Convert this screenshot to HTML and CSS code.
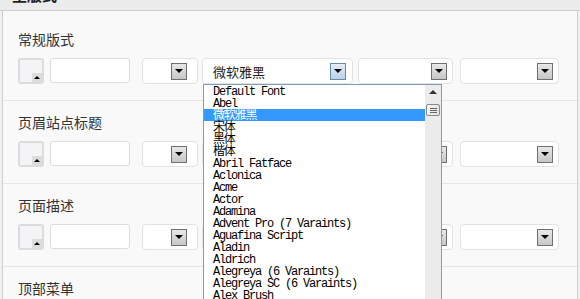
FILE: index.html
```html
<!DOCTYPE html>
<html lang="zh-CN">
<head>
    <meta charset="UTF-8">
    <meta name="viewport" content="width=device-width, initial-scale=1.0">
    <title>主版式</title>
    <link rel="stylesheet" href="styles.css">
</head>
<body>
    <div class="topbar"><span class="topbar-title">主版式</span></div>

    <div class="panel">
        <div class="section">
            <div class="label">常规版式</div>
            <div class="row">
                <div class="color-pick"><span class="color-arrow"></span></div>
                <input class="size-input" type="text">
                <div class="select select-unit"><span class="arrow"></span></div>
                <div class="select select-font">
                    <span class="select-text">微软雅黑</span>
                    <span class="arrow arrow-active"></span>
                    <div class="font-list">
                        <ul class="font-items">
                            <li>Default Font</li>
                            <li>Abel</li>
                            <li class="selected">微软雅黑</li>
                            <li>宋体</li>
                            <li>黑体</li>
                            <li>楷体</li>
                            <li>Abril Fatface</li>
                            <li>Aclonica</li>
                            <li>Acme</li>
                            <li>Actor</li>
                            <li>Adamina</li>
                            <li>Advent Pro (7 Varaints)</li>
                            <li>Aguafina Script</li>
                            <li>Aladin</li>
                            <li>Aldrich</li>
                            <li>Alegreya (6 Varaints)</li>
                            <li>Alegreya SC (6 Varaints)</li>
                            <li>Alex Brush</li>
                            <li>Alfa Slab One</li>
                            <li>Alice</li>
                        </ul>
                        <div class="scrollbar">
                            <div class="scroll-up"></div>
                            <div class="scroll-thumb"><span></span><span></span><span></span></div>
                        </div>
                    </div>
                </div>
                <div class="select select-weight"><span class="arrow"></span></div>
                <div class="select select-style"><span class="arrow"></span></div>
            </div>
        </div>

        <div class="section">
            <div class="label">页眉站点标题</div>
            <div class="row">
                <div class="color-pick"><span class="color-arrow"></span></div>
                <input class="size-input" type="text">
                <div class="select select-unit"><span class="arrow"></span></div>
                <div class="select select-font"><span class="arrow"></span></div>
                <div class="select select-weight"><span class="arrow"></span></div>
                <div class="select select-style"><span class="arrow"></span></div>
            </div>
        </div>

        <div class="section">
            <div class="label">页面描述</div>
            <div class="row">
                <div class="color-pick"><span class="color-arrow"></span></div>
                <input class="size-input" type="text">
                <div class="select select-unit"><span class="arrow"></span></div>
                <div class="select select-font"><span class="arrow"></span></div>
                <div class="select select-weight"><span class="arrow"></span></div>
                <div class="select select-style"><span class="arrow"></span></div>
            </div>
        </div>

        <div class="section">
            <div class="label">顶部菜单</div>
            <div class="row">
                <div class="color-pick"><span class="color-arrow"></span></div>
                <input class="size-input" type="text">
                <div class="select select-unit"><span class="arrow"></span></div>
                <div class="select select-font"><span class="arrow"></span></div>
                <div class="select select-weight"><span class="arrow"></span></div>
                <div class="select select-style"><span class="arrow"></span></div>
            </div>
        </div>
    </div>
</body>
</html>
```

FILE: styles.css
```css
body {
    margin: 0;
    width: 580px;
    background-color: #f1f1f1;
    font-family: "Noto Sans CJK SC", sans-serif;
    color: #333;
}
.topbar {
    height: 10px;
    overflow: hidden;
    padding-left: 12px;
    background-color: #ececec;
    border-bottom: 1px solid #cfcfcf;
}
.topbar-title {
    display: block;
    margin-top: -15px;
    font-size: 15px;
    line-height: 20px;
    font-weight: bold;
    color: #222;
}
.panel {
    margin: 0 2px;
    padding-top: 7px;
    background-color: #f9f9f9;
    border-left: 1px solid #cfcfcf;
    border-right: 1px solid #cfcfcf;
}
.section {
    padding: 11px 15px 16px;
    border-bottom: 1px solid #e6e6e6;
}
.label {
    font-size: 14px;
    line-height: 20px;
    color: #333;
    margin-bottom: 9px;
}
.row {
    display: flex;
    height: 26px;
}
.color-pick {
    width: 26px;
    height: 26px;
    box-sizing: border-box;
    border: 2px solid #dcdcdc;
    border-radius: 3px;
    background-color: #f4f4f6;
    display: flex;
    justify-content: flex-end;
    align-items: flex-end;
}
.color-arrow {
    width: 10px;
    height: 9px;
    background-color: #dcdcdc;
    display: flex;
    justify-content: center;
    align-items: center;
}
.color-arrow::after {
    content: "";
    border-left: 3px solid transparent;
    border-right: 3px solid transparent;
    border-bottom: 3px solid #000;
}
.size-input {
    margin: 0 0 0 6px;
    width: 80px;
    height: 25px;
    box-sizing: border-box;
    padding: 0;
    border: 1px solid #dedede;
    border-radius: 3px;
    background-color: #fff;
}
.select {
    height: 26px;
    box-sizing: border-box;
    border: 1px solid #e2e2e2;
    border-radius: 4px;
    background-color: #fff;
    display: flex;
    align-items: center;
    justify-content: flex-end;
    padding-right: 5px;
}
.select-unit {
    margin-left: 12px;
    width: 56px;
    padding-right: 10px;
}
.select-font {
    margin-left: 4px;
    width: 151px;
    padding-right: 6px;
    position: relative;
}
.select-text {
    margin-right: auto;
    padding-left: 10px;
    font-size: 13px;
    color: #222;
}
.select-weight {
    margin-left: 5px;
    width: 95px;
}
.select-style {
    margin-left: 7px;
    width: 99px;
}
.arrow {
    width: 16px;
    height: 17px;
    box-sizing: border-box;
    border: 1px solid #707070;
    background: linear-gradient(#e8e8e8, #c6c6c6);
    display: flex;
    justify-content: center;
    align-items: center;
}
.arrow::after {
    content: "";
    border-left: 4px solid transparent;
    border-right: 4px solid transparent;
    border-top: 4px solid #000;
}
.arrow-active {
    border-color: #6d8aa5;
    background: linear-gradient(#e4eef8, #b9d1ea);
}
.font-list {
    position: absolute;
    top: 25px;
    left: 0;
    width: 239px;
    height: 240px;
    box-sizing: border-box;
    border: 1px solid #7f9db9;
    background-color: #fff;
    display: flex;
    overflow: hidden;
    z-index: 5;
}
.font-items {
    flex: 1;
    list-style: none;
    margin: 0;
    padding: 0;
    font-family: "Liberation Mono", "Noto Sans CJK SC", monospace;
    font-size: 12px;
    letter-spacing: -1.2px;
    color: #000;
}
.font-items li {
    height: 12px;
    line-height: 15px;
    padding-left: 9px;
    white-space: nowrap;
}
.font-items .selected {
    background-color: #3399ff;
    color: #fff;
}
.scrollbar {
    width: 16px;
    background-color: #ececec;
}
.scroll-up {
    height: 14px;
    display: flex;
    justify-content: center;
    align-items: center;
}
.scroll-up::after {
    content: "";
    border-left: 4px solid transparent;
    border-right: 4px solid transparent;
    border-bottom: 4px solid #333;
}
.scroll-thumb {
    margin: 5px 1px 0;
    height: 12px;
    box-sizing: border-box;
    border: 1px solid #8a8a8a;
    border-radius: 2px;
    background: linear-gradient(90deg, #f8f8f8, #e2e2e2);
    display: flex;
    flex-direction: column;
    justify-content: center;
    align-items: center;
    gap: 1px;
}
.scroll-thumb span {
    width: 7px;
    height: 1px;
    background-color: #666;
}
```
